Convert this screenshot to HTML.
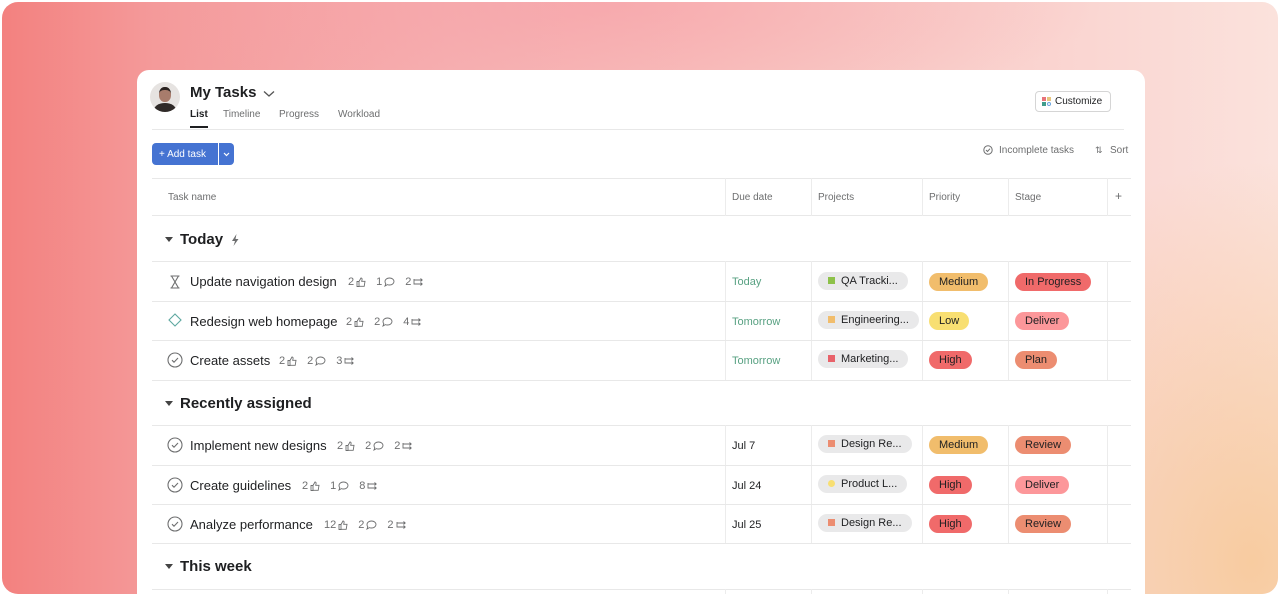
<!DOCTYPE html>
<html><head><meta charset="utf-8"><style>
*{box-sizing:border-box;margin:0;padding:0}
body{width:1280px;height:596px;overflow:hidden;background:#fff;font-family:"Liberation Sans",sans-serif;color:#1e1f21;position:relative}
.bg{position:absolute;left:2px;top:2px;width:1276px;height:592px;border-radius:16px;overflow:hidden;
background:linear-gradient(90deg,#f3817f 0%,#f49a9a 12%,#f6b3b3 35%,#f8c6c2 60%,#fad6d2 85%,#fbe2dc 100%)}
.bg:after{content:"";position:absolute;inset:0;background:radial-gradient(ellipse 300px 400px at 1250px 560px,rgba(247,200,150,.85),rgba(247,200,150,0) 100%),radial-gradient(ellipse 500px 120px at 600px 0px,rgba(247,150,160,.5),rgba(0,0,0,0))}
.card{position:absolute;left:137px;top:70px;width:1008px;height:524px;background:#fff;border-radius:12px 12px 0 0;overflow:hidden}
.a{position:absolute;white-space:nowrap}
.hl{position:absolute;left:15px;width:979px;height:1px;background:#e8e8e8}
.vl{position:absolute;width:1px;background:#ececec}
.t13{font-size:13px}
.meta{font-size:11px;color:#6d6e6f;display:flex;align-items:center;gap:2px}
.meta svg{margin-right:8px}
.pill{position:absolute;height:18px;border-radius:9px;font-size:11px;line-height:18px;padding:0 10px;color:#1e1f21}
.proj{position:absolute;height:18px;border-radius:9px;font-size:11px;line-height:18px;padding:0 10px 0 10px;background:#e9e9ea;color:#1e1f21}
.proj i{display:inline-block;width:7px;height:7px;margin-right:6px;vertical-align:0px}
.due{font-size:11px}
.sec{position:absolute;left:28px;font-size:15px;font-weight:bold;display:flex;align-items:center}
.sec:before{content:"";border-left:4px solid transparent;border-right:4px solid transparent;border-top:5px solid #444;margin-right:7px}
</style></head><body>
<div class="bg"></div>
<div class="card">
 <div class="a" style="left:13px;top:12px;width:30px;height:30px;border-radius:50%;background:#e6e3e1;overflow:hidden">
  <div class="a" style="left:9px;top:5px;width:12px;height:15px;border-radius:45%;background:#a87c6c;border-top:3px solid #2a2220"></div>
  <div class="a" style="left:4px;top:21px;width:22px;height:14px;border-radius:50% 50% 0 0;background:#2f2a28"></div>
 </div>
 <div class="a" style="left:53px;top:14px;font-size:15px;font-weight:bold">My Tasks</div>
 <svg class="a" style="left:126px;top:20px" width="12" height="8"><path d="M1 1.5l5 4.5 5-4.5" fill="none" stroke="#555" stroke-width="1.3"/></svg>
 <div class="a" style="left:53px;top:39px;font-size:10px;font-weight:bold">List</div>
 <div class="a" style="left:53px;top:56px;width:18px;height:2px;background:#1e1f21"></div>
 <div class="a" style="left:86px;top:39px;font-size:10px;color:#6d6e6f">Timeline</div>
 <div class="a" style="left:142px;top:39px;font-size:10px;color:#6d6e6f">Progress</div>
 <div class="a" style="left:201px;top:39px;font-size:10px;color:#6d6e6f">Workload</div>
 <div class="a" style="left:898px;top:21px;width:76px;height:21px;border:1px solid #d5d5d5;border-radius:4px;font-size:10px;line-height:20px;padding-left:19px">Customize</div>
 <div class="a" style="left:905px;top:27px;width:4px;height:4px;background:#e8737a"></div>
 <div class="a" style="left:910px;top:27px;width:4px;height:4px;background:#e7c57e"></div>
 <div class="a" style="left:905px;top:32px;width:4px;height:4px;background:#3f9c8b"></div>
 <div class="a" style="left:910px;top:32px;width:4px;height:4px;border:1px solid #6aa3dd;border-radius:50%"></div>
 <div class="a" style="left:15px;top:59px;width:972px;height:1px;background:#e8e8e8"></div>
 <div class="a" style="left:15px;top:73px;width:66px;height:22px;background:#4573d2;border-radius:4px 0 0 4px;color:#fff;font-size:10px;line-height:23px;padding-left:7px">+ Add task</div>
 <div class="a" style="left:82px;top:73px;width:15px;height:22px;background:#4573d2;border-radius:0 4px 4px 0"></div>
 <svg class="a" style="left:86px;top:82px" width="7" height="5"><path d="M1 1l2.5 2.5L6 1" fill="none" stroke="#fff" stroke-width="1.2"/></svg>
 <svg class="a" style="left:846px;top:75px" width="10" height="10"><circle cx="5" cy="5" r="4.2" fill="none" stroke="#6d6e6f"/><path d="M3 5l1.5 1.5L7 3.7" fill="none" stroke="#6d6e6f"/></svg>
 <div class="a" style="left:862px;top:75px;font-size:10px;color:#6d6e6f">Incomplete tasks</div>
 <div class="a" style="left:958px;top:75px;font-size:9px;color:#6d6e6f">⇅</div>
 <div class="a" style="left:973px;top:75px;font-size:10px;color:#6d6e6f">Sort</div>

 <div class="hl" style="top:108px"></div>
 <div class="hl" style="top:145px"></div>
 <div class="a" style="left:31px;top:122px;font-size:10px;color:#6d6e6f">Task name</div>
 <div class="a" style="left:595px;top:122px;font-size:10px;color:#6d6e6f">Due date</div>
 <div class="a" style="left:681px;top:122px;font-size:10px;color:#6d6e6f">Projects</div>
 <div class="a" style="left:792px;top:122px;font-size:10px;color:#6d6e6f">Priority</div>
 <div class="a" style="left:878px;top:122px;font-size:10px;color:#6d6e6f">Stage</div>
 <div class="a" style="left:978px;top:119px;font-size:12px;color:#6d6e6f">+</div>
 <div class="vl" style="left:588px;top:108px;height:38px"></div><div class="vl" style="left:674px;top:108px;height:38px"></div><div class="vl" style="left:785px;top:108px;height:38px"></div><div class="vl" style="left:871px;top:108px;height:38px"></div><div class="vl" style="left:970px;top:108px;height:38px"></div>

 <div class="sec" style="top:161px">Today</div>
 <svg class="a" style="left:93px;top:163px" width="10" height="14"><path d="M6.5 1L2 8h3l-1.5 5L8.5 6h-3z" fill="#6d6e6f"/></svg>
 <div class="hl" style="top:191px"></div>
 <div class="vl" style="left:588px;top:191px;height:119px"></div><div class="vl" style="left:674px;top:191px;height:119px"></div><div class="vl" style="left:785px;top:191px;height:119px"></div><div class="vl" style="left:871px;top:191px;height:119px"></div><div class="vl" style="left:970px;top:191px;height:119px"></div>
 <div class="hl" style="top:231px"></div><div class="hl" style="top:270px"></div><div class="hl" style="top:310px"></div>

 <svg class="a" style="left:32px;top:205px" width="12" height="14"><path d="M1.5 1h9M1.5 13h9M2.5 1l3.5 6-3.5 6M9.5 1L6 7l3.5 6" fill="none" stroke="#6d6e6f" stroke-width="1.1"/></svg>
 <div class="a t13" style="left:53px;top:204px">Update navigation design</div>
 <div class="a meta" style="left:211px;top:206px">2<svg width="10" height="10"><path d="M1 4.5h2v5H1zM3 4.5l2-3.5c1 0 1.3.8 1 2l-.3 1.3H9l-.8 5H3" fill="none" stroke="#6d6e6f" stroke-width=".9"/></svg>1<svg width="11" height="10"><path d="M5.5 1C8 1 10 2.6 10 4.5S8 8 5.5 8c-.8 0-1.5-.1-2.1-.4L1 9l.8-2.2C1.3 6.2 1 5.4 1 4.5 1 2.6 3 1 5.5 1z" fill="none" stroke="#6d6e6f" stroke-width=".9"/></svg>2<svg width="11" height="10"><path d="M1 2v5h8M1 3h8M7.5 1.5 9.2 3 7.5 4.5M7.5 5.5 9.2 7 7.5 8.5" fill="none" stroke="#6d6e6f" stroke-width=".9"/></svg></div>
 <div class="a due" style="left:595px;top:206px;color:#58a182">Today</div>
 <div class="proj" style="left:681px;top:202px"><i style="background:#8dc149"></i>QA Tracki...</div>
 <div class="pill" style="left:792px;top:203px;background:#f1bd6c">Medium</div>
 <div class="pill" style="left:878px;top:203px;background:#f06a6a">In Progress</div>

 <svg class="a" style="left:31px;top:243px" width="14" height="14"><path d="M7 1l6 6-6 6-6-6z" fill="none" stroke="#5ea8a0" stroke-width="1.1"/></svg>
 <div class="a t13" style="left:53px;top:244px">Redesign web homepage</div>
 <div class="a meta" style="left:209px;top:246px">2<svg width="10" height="10"><path d="M1 4.5h2v5H1zM3 4.5l2-3.5c1 0 1.3.8 1 2l-.3 1.3H9l-.8 5H3" fill="none" stroke="#6d6e6f" stroke-width=".9"/></svg>2<svg width="11" height="10"><path d="M5.5 1C8 1 10 2.6 10 4.5S8 8 5.5 8c-.8 0-1.5-.1-2.1-.4L1 9l.8-2.2C1.3 6.2 1 5.4 1 4.5 1 2.6 3 1 5.5 1z" fill="none" stroke="#6d6e6f" stroke-width=".9"/></svg>4<svg width="11" height="10"><path d="M1 2v5h8M1 3h8M7.5 1.5 9.2 3 7.5 4.5M7.5 5.5 9.2 7 7.5 8.5" fill="none" stroke="#6d6e6f" stroke-width=".9"/></svg></div>
 <div class="a due" style="left:595px;top:246px;color:#58a182">Tomorrow</div>
 <div class="proj" style="left:681px;top:241px"><i style="background:#f1bd6c"></i>Engineering...</div>
 <div class="pill" style="left:792px;top:242px;background:#f8df72">Low</div>
 <div class="pill" style="left:878px;top:242px;background:#fc979a">Deliver</div>

 <svg class="a" style="left:30px;top:282px" width="16" height="16"><circle cx="8" cy="8" r="7" fill="none" stroke="#6d6e6f" stroke-width="1.1"/><path d="M5 8.2l2 2L11 6" fill="none" stroke="#6d6e6f" stroke-width="1.1"/></svg>
 <div class="a t13" style="left:53px;top:283px">Create assets</div>
 <div class="a meta" style="left:142px;top:285px">2<svg width="10" height="10"><path d="M1 4.5h2v5H1zM3 4.5l2-3.5c1 0 1.3.8 1 2l-.3 1.3H9l-.8 5H3" fill="none" stroke="#6d6e6f" stroke-width=".9"/></svg>2<svg width="11" height="10"><path d="M5.5 1C8 1 10 2.6 10 4.5S8 8 5.5 8c-.8 0-1.5-.1-2.1-.4L1 9l.8-2.2C1.3 6.2 1 5.4 1 4.5 1 2.6 3 1 5.5 1z" fill="none" stroke="#6d6e6f" stroke-width=".9"/></svg>3<svg width="11" height="10"><path d="M1 2v5h8M1 3h8M7.5 1.5 9.2 3 7.5 4.5M7.5 5.5 9.2 7 7.5 8.5" fill="none" stroke="#6d6e6f" stroke-width=".9"/></svg></div>
 <div class="a due" style="left:595px;top:285px;color:#58a182">Tomorrow</div>
 <div class="proj" style="left:681px;top:280px"><i style="background:#e8626a"></i>Marketing...</div>
 <div class="pill" style="left:792px;top:281px;background:#f06a6a">High</div>
 <div class="pill" style="left:878px;top:281px;background:#ec8d71">Plan</div>

 <div class="sec" style="top:325px">Recently assigned</div>
 <div class="hl" style="top:355px"></div>
 <div class="vl" style="left:588px;top:355px;height:119px"></div><div class="vl" style="left:674px;top:355px;height:119px"></div><div class="vl" style="left:785px;top:355px;height:119px"></div><div class="vl" style="left:871px;top:355px;height:119px"></div><div class="vl" style="left:970px;top:355px;height:119px"></div>
 <div class="hl" style="top:395px"></div><div class="hl" style="top:434px"></div><div class="hl" style="top:473px"></div>

 <svg class="a" style="left:30px;top:367px" width="16" height="16"><circle cx="8" cy="8" r="7" fill="none" stroke="#6d6e6f" stroke-width="1.1"/><path d="M5 8.2l2 2L11 6" fill="none" stroke="#6d6e6f" stroke-width="1.1"/></svg>
 <div class="a t13" style="left:53px;top:368px">Implement new designs</div>
 <div class="a meta" style="left:200px;top:370px">2<svg width="10" height="10"><path d="M1 4.5h2v5H1zM3 4.5l2-3.5c1 0 1.3.8 1 2l-.3 1.3H9l-.8 5H3" fill="none" stroke="#6d6e6f" stroke-width=".9"/></svg>2<svg width="11" height="10"><path d="M5.5 1C8 1 10 2.6 10 4.5S8 8 5.5 8c-.8 0-1.5-.1-2.1-.4L1 9l.8-2.2C1.3 6.2 1 5.4 1 4.5 1 2.6 3 1 5.5 1z" fill="none" stroke="#6d6e6f" stroke-width=".9"/></svg>2<svg width="11" height="10"><path d="M1 2v5h8M1 3h8M7.5 1.5 9.2 3 7.5 4.5M7.5 5.5 9.2 7 7.5 8.5" fill="none" stroke="#6d6e6f" stroke-width=".9"/></svg></div>
 <div class="a due" style="left:595px;top:370px">Jul 7</div>
 <div class="proj" style="left:681px;top:365px"><i style="background:#ec8d71"></i>Design Re...</div>
 <div class="pill" style="left:792px;top:366px;background:#f1bd6c">Medium</div>
 <div class="pill" style="left:878px;top:366px;background:#ec8d71">Review</div>

 <svg class="a" style="left:30px;top:407px" width="16" height="16"><circle cx="8" cy="8" r="7" fill="none" stroke="#6d6e6f" stroke-width="1.1"/><path d="M5 8.2l2 2L11 6" fill="none" stroke="#6d6e6f" stroke-width="1.1"/></svg>
 <div class="a t13" style="left:53px;top:408px">Create guidelines</div>
 <div class="a meta" style="left:165px;top:410px">2<svg width="10" height="10"><path d="M1 4.5h2v5H1zM3 4.5l2-3.5c1 0 1.3.8 1 2l-.3 1.3H9l-.8 5H3" fill="none" stroke="#6d6e6f" stroke-width=".9"/></svg>1<svg width="11" height="10"><path d="M5.5 1C8 1 10 2.6 10 4.5S8 8 5.5 8c-.8 0-1.5-.1-2.1-.4L1 9l.8-2.2C1.3 6.2 1 5.4 1 4.5 1 2.6 3 1 5.5 1z" fill="none" stroke="#6d6e6f" stroke-width=".9"/></svg>8<svg width="11" height="10"><path d="M1 2v5h8M1 3h8M7.5 1.5 9.2 3 7.5 4.5M7.5 5.5 9.2 7 7.5 8.5" fill="none" stroke="#6d6e6f" stroke-width=".9"/></svg></div>
 <div class="a due" style="left:595px;top:410px">Jul 24</div>
 <div class="proj" style="left:681px;top:405px"><i style="background:#f8df72;border-radius:50%"></i>Product L...</div>
 <div class="pill" style="left:792px;top:406px;background:#f06a6a">High</div>
 <div class="pill" style="left:878px;top:406px;background:#fc979a">Deliver</div>

 <svg class="a" style="left:30px;top:446px" width="16" height="16"><circle cx="8" cy="8" r="7" fill="none" stroke="#6d6e6f" stroke-width="1.1"/><path d="M5 8.2l2 2L11 6" fill="none" stroke="#6d6e6f" stroke-width="1.1"/></svg>
 <div class="a t13" style="left:53px;top:447px">Analyze performance</div>
 <div class="a meta" style="left:187px;top:449px">12<svg width="10" height="10"><path d="M1 4.5h2v5H1zM3 4.5l2-3.5c1 0 1.3.8 1 2l-.3 1.3H9l-.8 5H3" fill="none" stroke="#6d6e6f" stroke-width=".9"/></svg>2<svg width="11" height="10"><path d="M5.5 1C8 1 10 2.6 10 4.5S8 8 5.5 8c-.8 0-1.5-.1-2.1-.4L1 9l.8-2.2C1.3 6.2 1 5.4 1 4.5 1 2.6 3 1 5.5 1z" fill="none" stroke="#6d6e6f" stroke-width=".9"/></svg>2<svg width="11" height="10"><path d="M1 2v5h8M1 3h8M7.5 1.5 9.2 3 7.5 4.5M7.5 5.5 9.2 7 7.5 8.5" fill="none" stroke="#6d6e6f" stroke-width=".9"/></svg></div>
 <div class="a due" style="left:595px;top:449px">Jul 25</div>
 <div class="proj" style="left:681px;top:444px"><i style="background:#ec8d71"></i>Design Re...</div>
 <div class="pill" style="left:792px;top:445px;background:#f06a6a">High</div>
 <div class="pill" style="left:878px;top:445px;background:#ec8d71">Review</div>

 <div class="sec" style="top:488px">This week</div>
 <div class="hl" style="top:519px"></div>
 <div class="vl" style="left:588px;top:519px;height:20px"></div><div class="vl" style="left:674px;top:519px;height:20px"></div><div class="vl" style="left:785px;top:519px;height:20px"></div><div class="vl" style="left:871px;top:519px;height:20px"></div><div class="vl" style="left:970px;top:519px;height:20px"></div>
</div>
</body></html>
